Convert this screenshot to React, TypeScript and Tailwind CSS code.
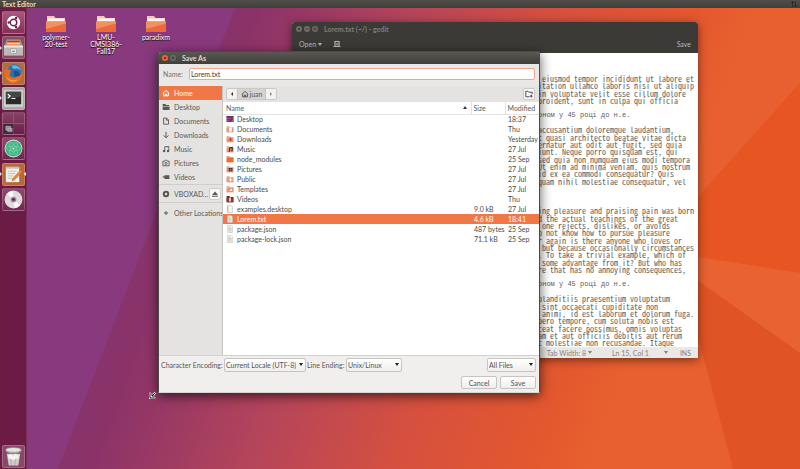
import type { ReactNode } from "react";

const EDITOR_LINES = [
  " eiusmod tempor incididunt ut labore et",
  "itation ullamco laboris nisi ut aliquip",
  "in voluptate velit esse cillum dolore",
  "proident, sunt in culpa qui officia",
  "",
  "оном у 45 році до н.е.",
  "",
  "accusantium doloremque laudantium,",
  "t quasi architecto beatae vitae dicta",
  "ernatur aut odit aut fugit, sed quia",
  "iunt. Neque porro quisquam est, qui",
  "sed quia non numquam eius modi tempora",
  "Ut enim ad minima veniam, quis nostrum",
  "id ex ea commodi consequatur? Quis",
  "quam nihil molestiae consequatur, vel",
  "",
  "",
  "",
  "ing pleasure and praising pain was born",
  "d the actual teachings of the great",
  " one rejects, dislikes, or avoids",
  "o not know how to pursue pleasure",
  "r again is there anyone who loves or",
  " but because occasionally circumstances",
  ". To take a trivial example, which of",
  " some advantage from it? But who has",
  "re that has no annoying consequences,",
  "",
  "оном у 45 році до н.е.",
  "",
  "blanditiis praesentium voluptatum",
  " sint occaecati cupiditate non",
  " animi, id est laborum et dolorum fuga.",
  "bero tempore, cum soluta nobis est",
  "ceat facere possimus, omnis voluptas",
  "am et aut officiis debitis aut rerum",
  "t molestiae non recusandae. Itaque",
  " voluptatibus maiores alias consequatur",
];

const CYRILLIC = /[\u0400-\u04ff]/;

type Row = { name: string; size?: string; modified: string; kind: string; selected?: boolean };

const FILES: Row[] = [
  { name: "Desktop", modified: "18:37", kind: "desktop" },
  { name: "Documents", modified: "Thu", kind: "document" },
  { name: "Downloads", modified: "Yesterday", kind: "download" },
  { name: "Music", modified: "27 Jul", kind: "music" },
  { name: "node_modules", modified: "25 Sep", kind: "folder" },
  { name: "Pictures", modified: "27 Jul", kind: "picture" },
  { name: "Public", modified: "27 Jul", kind: "public" },
  { name: "Templates", modified: "27 Jul", kind: "template" },
  { name: "Videos", modified: "Thu", kind: "video" },
  { name: "examples.desktop", size: "9.0 kB", modified: "27 Jul", kind: "blank" },
  { name: "Lorem.txt", size: "4.6 kB", modified: "18:41", kind: "text", selected: true },
  { name: "package.json", size: "487 bytes", modified: "25 Sep", kind: "text" },
  { name: "package-lock.json", size: "71.1 kB", modified: "25 Sep", kind: "text" },
];

function FileIcon({ kind }: { kind: string }) {
  if (kind === "blank" || kind === "text") {
    return (
      <svg viewBox="0 0 8 8" className="size-2 shrink-0" aria-hidden="true">
        <path d="M1.5 .5h3.7l1.3 1.4v5.6h-5z" fill="#f4f3f2" stroke="#bab8b5" strokeWidth=".5" />
        {kind === "text" && <path d="M2.4 2.4h2M2.4 3.6h3.1M2.4 4.8h3.1M2.4 6h3.1" stroke="#a5a3a0" strokeWidth=".5" />}
        {kind === "blank" && <path d="M1.8 .8v6.6" stroke="#8f8d8a" strokeWidth=".5" />}
      </svg>
    );
  }
  if (kind === "desktop") {
    return (
      <svg viewBox="0 0 8 8" className="size-2 shrink-0" aria-hidden="true">
        <path d="M.5 1h7v6h-7z" fill="#7b2f72" />
        <path d="M.5 1h7v1h-7z" fill="#5b3a58" />
        <path d="M1.4 3h1.2v1H1.4zM3.4 3h1.2v1H3.4zM1.4 5h1.2v1H1.4z" fill="#d06aa0" />
        <path d="M5.5 5h2v2h-2z" fill="#b04a62" />
      </svg>
    );
  }
  return (
    <svg viewBox="0 0 8 8" className="size-2 shrink-0" aria-hidden="true">
      <path d="M.6 1h2.8l.7.9h3.3v5.3H.6z" fill={kind === "video" ? "#5c2a2a" : kind === "folder" ? "#f7a072" : "#f0b79f"} />
      <path d="M.6 2.8h6.8v4.4H.6z" fill={kind === "folder" ? "#ee6a33" : kind === "video" ? "#8a3b34" : "#e89a78"} />
      {kind === "document" && <path d="M3 2.6h3v3.8H3z" fill="#fff" />}
      {kind === "download" && <path d="M4.5 2.6v3M3.2 4.3l1.3 1.5 1.3-1.5" stroke="#8c3a1c" strokeWidth=".8" fill="none" />}
      {kind === "music" && <path d="M3.6 6.2V3l2.6-.5v3.2M2.6 6.2h1.2M5.2 5.8h1.2" stroke="#3a2620" strokeWidth="1.1" fill="none" />}
      {kind === "picture" && <path d="M2.6 3h3.8v3.2H2.6zM4 4h1.2v1.2H4z" fill="#433843" fillRule="evenodd" />}
      {kind === "public" && <path d="M4.5 2.7v3.6M3 4.8h3.4" stroke="#fff" strokeWidth="1" />}
      {kind === "template" && <path d="M2.8 6l3-3.2.8 3.2z" fill="#fff" stroke="#c77655" strokeWidth=".4" />}
      {kind === "video" && <path d="M3 2.4h2v4H3z" fill="#e9c2b2" />}
    </svg>
  );
}

const PLACE_ICONS: Record<string, ReactNode> = {
  Home: <path d="M.8 4.4 4 1.4l3.2 3M1.7 4v3h1.7V5.2h1.2V7h1.7V4" fill="none" stroke="currentColor" strokeWidth="1" />,
  Desktop: <path d="M.7 1h2.6l.7 1h3v1H.7zM.7 3.5h6.8V7H.7z" fill="currentColor" />,
  Documents: <path d="M1.6 1h3l1.9 2v4.2H1.6zM4.4 1v2.2h2.1" fill="none" stroke="currentColor" strokeWidth=".9" />,
  Downloads: <path d="M4 .8v6M1.6 4.4 4 6.8l2.4-2.4" fill="none" stroke="currentColor" strokeWidth="1" />,
  Music: (
    <g fill="currentColor">
      <path d="M2.4 1.2h4.8v1H3.2V6h-.8zM6.4 1.2h.8v5h-.8z" />
      <circle cx="2.1" cy="6" r="1.2" />
      <circle cx="6" cy="6" r="1.2" />
    </g>
  ),
  Pictures: (
    <g fill="none" stroke="currentColor">
      <path d="M.9 2.2h1.7l.6-1h1.6l.6 1h1.7v4.6H.9z" strokeWidth=".9" />
      <circle cx="4" cy="4.4" r="1.1" strokeWidth=".9" />
    </g>
  ),
  Videos: <path d="M.4 4 2.4 2.7v2.6zM2.6 2.2h4.8v3.9H2.6z" fill="currentColor" />,
};

function PlaceIcon({ name }: { name: string }) {
  return (
    <svg viewBox="0 0 8 8" className="size-2 shrink-0" aria-hidden="true">
      {PLACE_ICONS[name]}
    </svg>
  );
}

function Wallpaper() {
  return (
    <svg className="absolute inset-0 size-full" viewBox="0 0 800 469" preserveAspectRatio="none" aria-hidden="true">
      <defs>
        <linearGradient id="sky" gradientUnits="userSpaceOnUse" x1="150" y1="120" x2="650" y2="300">
          <stop offset="0" stopColor="#87336f" />
          <stop offset=".12" stopColor="#8b3369" />
          <stop offset=".4" stopColor="#b5455a" />
          <stop offset=".65" stopColor="#d5503f" />
          <stop offset=".9" stopColor="#e4582e" />
          <stop offset="1" stopColor="#e8602f" />
        </linearGradient>
      </defs>
      <path d="M0 0h800v469H0z" fill="url(#sky)" />
      <path d="M0 0h238L58 469H0z" fill="#89397d" />
      <path d="M800 83 680 217v40l120 16z" fill="#e65522" />
      <path d="M680 254l120 19v80L680 270z" fill="#e96232" />
      <path d="M680 268l120 85v116h-67z" fill="#e05325" />
    </svg>
  );
}

function Tile({ label, tone, running, focused, children }: { label: string; tone: string; running?: boolean; focused?: boolean; children: ReactNode }) {
  return (
    <button type="button" aria-label={label} className="relative flex h-[23px] w-full items-center justify-center">
      {running && <span className="absolute left-0 size-0 border-y-2 border-l-2 border-y-transparent border-l-[#e3d5dd]" />}
      <span className={`flex size-[23px] items-center justify-center rounded-[2px] border border-white/20 ${tone}`}>
        <svg viewBox="0 0 22 22" className="size-[21px]" aria-hidden="true">
          {children}
        </svg>
      </span>
      {focused && <span className="absolute right-0 size-0 border-y-2 border-r-2 border-y-transparent border-r-white" />}
    </button>
  );
}

function Launcher() {
  return (
    <nav aria-label="Launcher" className="flex w-[27px] shrink-0 flex-col justify-between border-r border-[#7d2b59] bg-[#6c1b45] pt-[3px] pb-px">
      <div className="flex h-[200px] flex-col justify-between">
        <Tile label="Search your computer" tone="bg-gradient-to-b from-[#a8577c] to-[#8a2d58]">
          <circle cx="11" cy="11" r="7" fill="#fff" />
          <circle cx="11" cy="11" r="3.4" fill="none" stroke="#6c2048" strokeWidth="1.5" />
          <path d="M5.3 11h2M13 7.4l1.2-2M13 14.6l1.2 2" stroke="#fff" strokeWidth="1.6" />
          <circle cx="6" cy="11" r="1.3" fill="#6c2048" />
          <circle cx="13.7" cy="6.4" r="1.3" fill="#6c2048" />
          <circle cx="13.7" cy="15.6" r="1.3" fill="#6c2048" />
        </Tile>
        <Tile label="Files" tone="bg-[#8c4a5f]" running>
          <path d="M4 2.500h14L21 11H1z" fill="#a19e9b" />
          <path d="M4.500 4h13v5h-13z" fill="#ef8a55" />
          <path d="M4.500 4h13v1.200h-13z" fill="#6b5148" />
          <path d="M4.500 6.500h13v1h-13z" fill="#f7dccf" />
          <path d="M1 9h20v10.500H1z" fill="#bcbbb9" />
          <path d="M1 9h20v2H1z" fill="#e6e5e4" />
          <path d="M8 12.500h6v4.500H8z" fill="#f7f6f6" stroke="#8a8886" strokeWidth=".6" />
          <path d="M9.500 14.900h3" stroke="#555" strokeWidth="1" />
        </Tile>
        <Tile label="Firefox" tone="bg-[#b06a44]" running>
          <circle cx="11" cy="11.500" r="9.500" fill="#e5641c" />
          <circle cx="12" cy="9" r="7.600" fill="#2a6fb8" />
          <path d="M9 3c3-2 9 0 10 5-2-2-3-1-4-2s-3 1-4 0-2-1-2-3z" fill="#63b6df" />
          <path d="M11 8l5 1 2 4-3 3-3-2z" fill="#1d4f8c" />
          <path d="M2 6c1 2 3 0 6 1 1 2-1 3-1 5 1 4 6 4 8 2 3 0 5-3 5-7 2 7-2 14-9 14S-.500 13 2 6z" fill="#ea6a1f" />
          <path d="M3 13c2 5 8 6 13 4-3 4-11 4-13-4z" fill="#f2a236" />
        </Tile>
        <Tile label="Terminal" tone="bg-[#a9a7a5]" running>
          <path d="M1 2h20v18H1z" fill="#cfcecc" />
          <path d="M3 4h16v13H3z" fill="#2a2a28" />
          <path d="M3 4h16v5L3 12z" fill="#464643" />
          <path d="M5 6.500l2.500 2L5 10.500M9 11h4" fill="none" stroke="#fff" strokeWidth="1.200" />
        </Tile>
        <Tile label="Workspace Switcher" tone="bg-gradient-to-b from-[#884369] to-[#6a1d45]">
          <path d="M11 0v22M0 11h22" stroke="#9b5c7e" strokeWidth=".8" />
          <path d="M.500 11.500H11V21.500H.500z" fill="#3f2a37" />
          <path d="M3 14h5v4H3zM5 16h4.500v3.500H5z" fill="#8f8590" stroke="#ccc2ca" strokeWidth=".6" />
        </Tile>
        <Tile label="Atom" tone="bg-gradient-to-b from-[#8f4a70] to-[#742450]">
          <circle cx="11" cy="11" r="9.300" fill="#d7ebe0" />
          <circle cx="11" cy="11" r="8.500" fill="#40b582" />
          <g fill="none" stroke="#7fd3aa" strokeWidth=".7">
            <ellipse cx="11" cy="11" rx="7" ry="2.600" />
            <ellipse cx="11" cy="11" rx="7" ry="2.600" transform="rotate(60 11 11)" />
            <ellipse cx="11" cy="11" rx="7" ry="2.600" transform="rotate(120 11 11)" />
          </g>
          <circle cx="11" cy="11" r="1" fill="#d7ebe0" />
        </Tile>
        <Tile label="Text Editor" tone="bg-[#b9683c]" running focused>
          <path d="M3 3h14v16H3z" fill="#f4f2ee" />
          <path d="M3 3h14v2H3z" fill="#c8c3ba" />
          <path d="M5 7.500h9M5 10h8M5 12.500h6M5 15h5" stroke="#b4b0aa" strokeWidth=".8" />
          <path d="M10 15.500 18.500 6l2 1.800-8.500 9-2.500.700z" fill="#ee8a2e" stroke="#9c5a1f" strokeWidth=".5" />
        </Tile>
        <Tile label="VBOXADDITIONS disc" tone="bg-gradient-to-b from-[#8f4a70] to-[#742450]">
          <circle cx="11" cy="11" r="9.300" fill="#dddcdc" />
          <path d="M11 11 4 5a9 9 0 0 1 6-3.200zM11 11l7 6a9 9 0 0 1-6 3.200z" fill="#f8f8f8" />
          <circle cx="11" cy="11" r="3" fill="#a7809a" />
          <circle cx="11" cy="11" r="1.400" fill="#5c1a3d" />
        </Tile>
      </div>
      <Tile label="Trash" tone="bg-[#8b4768]">
        <path d="M4 8h14l-2 12.500H6z" fill="#cfcecb" />
        <ellipse cx="11" cy="4.500" rx="8.500" ry="3.300" fill="#a8a5a4" />
        <ellipse cx="11" cy="4" rx="7.500" ry="2" fill="#e6e5e3" />
        <path d="M5 10l3-2 2 2 3-2 4 2-1 4-2-1-3 2-3-2-2 1z" fill="#f3f2f0" />
        <path d="M8 14l1 6M13 14l-.500 6" stroke="#a3a09d" strokeWidth=".8" />
      </Tile>
    </nav>
  );
}

function DesktopFolder({ lines }: { lines: string[] }) {
  return (
    <button type="button" className="flex w-[50px] flex-col items-center gap-px text-white">
      <svg viewBox="0 0 20 18" className="h-[18px] w-5" aria-hidden="true">
        <path d="M1 1h7l1.500 2H19v13H1z" fill="#f3c6b0" />
        <path d="M1.500 3.500h17v4h-17z" fill="#fdf6f2" />
        <path d="M0 6.500h20V17H0z" fill="#ec6a3a" />
        <path d="M0 6.500h20v2L0 14z" fill="#f39062" />
      </svg>
      <span className="text-[7px] leading-[7px] [text-shadow:0_1px_1px_#000]">
        {lines.map((l) => (
          <span key={l} className="block">
            {l}
          </span>
        ))}
      </span>
    </button>
  );
}

function Caret() {
  return <span className="inline-block size-0 border-x-2 border-t-[3px] border-x-transparent border-t-current" />;
}

function WindowDot({ close, children }: { close?: boolean; children: ReactNode }) {
  return (
    <button
      type="button"
      aria-label={close ? "Close" : "Window control"}
      className={`flex size-[6px] items-center justify-center rounded-full ${close ? "bg-[#ee6038] text-[#5c2412]" : "bg-[#6f6d67] text-[#3a3935]"}`}
    >
      <svg viewBox="0 0 6 6" className="size-[6px]" fill="none" stroke="currentColor" strokeWidth=".8" aria-hidden="true">
        {children}
      </svg>
    </button>
  );
}

function EditorWindow() {
  return (
    <section aria-label="gedit" className="absolute top-[14px] left-[265px] flex h-[336px] w-[406px] flex-col overflow-hidden rounded-t-[3px] bg-white text-[#4c4c4c] shadow-[0_2px_10px_rgba(0,0,0,0.5)]">
      <header className="flex h-[31px] shrink-0 flex-col bg-[#3b3a36] text-[#8d8a83]">
        <div className="flex h-[14px] items-center gap-[2px] pl-1">
          <WindowDot><path d="M2 2l2 2M4 2 2 4" /></WindowDot>
          <WindowDot><path d="M1.500 3h3" /></WindowDot>
          <WindowDot><path d="M2 2h2v2H2z" /></WindowDot>
          <h2 className="pl-1 text-[7px] leading-[8px] font-bold text-[#817e77]">Lorem.txt (~/) - gedit</h2>
        </div>
        <div className="flex flex-1 items-center pr-[7px] pb-px pl-[7px] text-[7px] leading-[8px] text-[#b8b5ae]">
          <button type="button" className="flex items-center gap-[2px]">
            Open <Caret />
          </button>
          <button type="button" aria-label="New document" className="ml-[11px]">
            <svg viewBox="0 0 8 8" className="size-2" fill="none" stroke="currentColor" aria-hidden="true">
              <path d="M2 6V1.500h4V6M.500 6.500h7M4 3v2.500" strokeWidth="1.200" />
            </svg>
          </button>
          <button type="button" className="ml-auto">Save</button>
        </div>
      </header>
      <div className="min-h-0 flex-1 overflow-hidden">
        <div
          role="textbox"
          aria-multiline="true"
          aria-label="Lorem.txt"
          className="grid h-[301px] auto-rows-fr pt-[22px] pl-[246px] font-['Noto_Sans_Mono_CJK_SC','Liberation_Mono',monospace] text-[8px] leading-[7px] whitespace-pre text-[#5c5c5c]"
        >
          {EDITOR_LINES.map((line, i) => (
            <div key={i} className={CYRILLIC.test(line) ? "font-['Liberation_Mono',monospace] text-[7px]" : ""}>
              {line}
            </div>
          ))}
        </div>
      </div>
      <footer className="flex h-[11px] shrink-0 items-center justify-end bg-[#e9e8e6] pr-[7px] text-[7px] leading-[8px] text-[#84827e]">
        <button type="button" className="mr-[20px] flex items-center gap-[2px]">Tab Width: 8 <Caret /></button>
        <button type="button" className="mr-3 flex items-center gap-[15px]">Ln 15, Col 1 <Caret /></button>
        <span>INS</span>
      </footer>
    </section>
  );
}

function Choice({ id, value, width }: { id: string; value: string; width: string }) {
  return (
    <span className={`relative block shrink-0 ${width}`}>
      <select
        id={id}
        aria-label={value}
        defaultValue={value}
        className="block h-[14px] w-full appearance-none rounded-[2px] border border-[#c6c4c1] bg-gradient-to-b from-white to-[#efeeec] pl-px text-[7px] leading-[12px] text-[#55534f]"
      >
        <option>{value}</option>
      </select>
      <span className="pointer-events-none absolute top-[5px] right-[3px] flex text-[#1e1e1e]">
        <Caret />
      </span>
    </span>
  );
}

function SaveDialog() {
  const place = "flex h-[14px] w-full items-center gap-1 pl-[3px]";
  const push = "h-[13px] w-9 rounded-[2px] border border-[#c6c4c1] bg-gradient-to-b from-white to-[#efeeec] text-[#55534f]";
  return (
    <section
      role="dialog"
      aria-label="Save As"
      className="absolute top-[43px] left-[131px] flex h-[342px] w-[382px] flex-col overflow-hidden rounded-t-[3px] border border-[#4c4a46] border-b-[#d8d6d3] bg-[#f0efed] text-[7px] leading-[8px] text-[#5a5854] shadow-[0_3px_12px_rgba(0,0,0,0.65)]"
    >
      <header className="flex h-3 shrink-0 items-center gap-[2px] bg-gradient-to-b from-[#5a5851] to-[#403f3b] pl-[3px]">
        <WindowDot close><path d="M2 2l2 2M4 2 2 4" /></WindowDot>
        <WindowDot><path d="M2 2h2v2H2z" /></WindowDot>
        <h2 className="pl-1 font-bold text-[#dfdbd2]">Save As</h2>
      </header>
      <div className="flex h-[22px] shrink-0 items-center gap-[6px] bg-[#e9e8e6] pr-1 pb-[2px] pl-1">
        <label htmlFor="file-name" className="text-[#73716d]">Name:</label>
        <input id="file-name" defaultValue="Lorem.txt" className="h-3 min-w-0 flex-1 rounded-[2px] border border-[#f2a58c] bg-white px-px text-[#3d3c3a] outline-none" />
      </div>
      <div className="flex min-h-0 flex-1 border-b border-[#d3d1ce]">
        <aside className="w-16 shrink-0 overflow-hidden border-r border-[#c5c3c0] bg-[#e4e3e1]">
          <ul>
            {["Home", "Desktop", "Documents", "Downloads", "Music", "Pictures", "Videos"].map((name) => (
              <li key={name}>
                <button type="button" className={`${place} ${name === "Home" ? "bg-[#f07746] text-white" : ""}`}>
                  <PlaceIcon name={name} />
                  {name}
                </button>
              </li>
            ))}
          </ul>
          <div className="flex h-[19px] items-center border-y border-[#d0cecb] pr-px">
            <button type="button" className="flex flex-1 items-center gap-1 pl-[3px]">
              <svg viewBox="0 0 8 8" className="size-2 shrink-0" aria-hidden="true">
                <circle cx="4" cy="4" r="2.200" fill="none" stroke="currentColor" strokeWidth="2" />
              </svg>
              VBOXAD…
            </button>
            <button type="button" aria-label="Eject" className="flex size-3 items-center justify-center rounded-[2px] border border-[#cfcdca] bg-[#f8f8f7]">
              <svg viewBox="0 0 8 8" className="size-2" fill="currentColor" aria-hidden="true">
                <path d="M4 1.500 7 5H1zM1 5.700h6v1.100H1z" />
              </svg>
            </button>
          </div>
          <button type="button" className="flex h-[19px] w-full items-center gap-1 pl-[3px] whitespace-nowrap">
            <svg viewBox="0 0 8 8" className="size-2 shrink-0" aria-hidden="true">
              <path d="M4 2v4M2 4h4" stroke="currentColor" strokeWidth="1" />
            </svg>
            Other Locations
          </button>
        </aside>
        <div className="flex min-w-0 flex-1 flex-col bg-white">
          <div className="flex h-4 shrink-0 items-center justify-between bg-[#e4e3e1] pr-1 pb-px pl-[3px]">
            <div className="flex h-3 items-stretch overflow-hidden rounded-[2px] border border-[#cbc9c6] bg-[#f3f2f1]">
              <button type="button" aria-label="Back" className="flex w-[10px] items-center justify-center">
                <span className="size-0 border-y-2 border-r-2 border-y-transparent border-r-[#33322f]" />
              </button>
              <button type="button" className="flex w-[29px] items-center justify-center gap-px border-x border-[#c6c4c1] bg-[#d6d4d1]">
                <PlaceIcon name="Home" />
                juan
              </button>
              <button type="button" aria-label="Forward" className="flex w-[10px] items-center justify-center">
                <span className="size-0 border-y-2 border-l-2 border-y-transparent border-l-[#8a8884]" />
              </button>
            </div>
            <button type="button" aria-label="Create Folder" className="flex size-3 items-center justify-center rounded-[2px] border border-[#cbc9c6] bg-[#fafafa]">
              <svg viewBox="0 0 8 8" className="size-2" fill="none" stroke="#3f3e3b" strokeWidth=".9" aria-hidden="true">
                <path d="M4.500 6.800H.800V1.200h2l.800 1h3.600v2M6.200 4.600v3M4.700 6.100h3" />
              </svg>
            </button>
          </div>
          <table className="w-full table-fixed border-collapse text-left text-[#4c4a47]">
            <colgroup>
              <col />
              <col className="w-[34px]" />
              <col className="w-[34px]" />
            </colgroup>
            <thead>
              <tr className="h-[12px] border-b border-[#e4e3e1] text-[#5d5b57]">
                <th className="p-0 pl-[3px] font-normal">
                  <span className="flex items-center justify-between pr-1">
                    Name <span className="size-0 border-x-2 border-b-[3px] border-x-transparent border-b-[#33322f]" />
                  </span>
                </th>
                <th className="border-l border-[#e4e3e1] p-0 pl-[2px] font-normal">Size</th>
                <th className="border-l border-[#e4e3e1] p-0 pl-[2px] font-normal">Modified</th>
              </tr>
            </thead>
            <tbody>
              {FILES.map((f) => (
                <tr key={f.name} className={`h-[10px] whitespace-nowrap ${f.selected ? "bg-[#f07746] text-white" : ""}`}>
                  <td className="p-0 pl-[3px]">
                    <span className="flex items-center gap-[3px]">
                      <FileIcon kind={f.kind} />
                      {f.name}
                    </span>
                  </td>
                  <td className="p-0 pl-[3px]">{f.size}</td>
                  <td className="p-0 pl-[3px]">{f.modified}</td>
                </tr>
              ))}
            </tbody>
          </table>
        </div>
      </div>
      <footer className="flex shrink-0 flex-col gap-1 py-[2px] pr-[3px] pl-[2px]">
        <div className="flex items-center">
          <label htmlFor="encoding" className="w-[63px] whitespace-nowrap">Character Encoding:</label>
          <Choice id="encoding" value="Current Locale (UTF-8)" width="w-[82px]" />
          <label htmlFor="ending" className="w-[40px] pl-px whitespace-nowrap">Line Ending:</label>
          <Choice id="ending" value="Unix/Linux" width="w-[56px]" />
          <span className="flex-1" />
          <Choice id="filter" value="All Files" width="w-[49px]" />
        </div>
        <div className="flex justify-end gap-[3px] pb-px">
          <button type="button" className={push}>Cancel</button>
          <button type="button" className={push}>Save</button>
        </div>
      </footer>
    </section>
  );
}

export default function App() {
  return (
    <div className="relative flex h-screen flex-col overflow-hidden bg-[#87336f] font-['Lato','Noto_Sans',sans-serif]">
      <Wallpaper />
      <header className="relative flex h-2 shrink-0 items-center justify-between bg-gradient-to-b from-[#504e48] to-[#403f3a] px-[2px] text-[7px] leading-[8px] font-bold text-[#dfdbd2]">
        <h1>Text Editor</h1>
        <svg viewBox="0 0 8 8" className="size-2" fill="none" stroke="#2b2a27" strokeWidth="1" aria-hidden="true">
          <path d="M2.500 7V1.500M1 3l1.500-1.500L4 3M5.500 1.500V7M4 5.500 5.500 7 7 5.500" />
        </svg>
      </header>
      <div className="relative flex min-h-0 flex-1">
        <Launcher />
        <main className="relative min-w-0 flex-1">
          <div className="flex items-start pt-[7px] pl-1">
            <DesktopFolder lines={["polymer-", "20-test"]} />
            <DesktopFolder lines={["LMU-", "CMSI386-", "Fall17"]} />
            <DesktopFolder lines={["paradixm"]} />
          </div>
          <EditorWindow />
          <SaveDialog />
          <svg viewBox="0 0 8 8" className="absolute top-[383px] left-[122px] size-2" aria-hidden="true">
            <path d="M1 1v6h6M6.500 1.500 3 5M3 2.500V5h2.500" fill="none" stroke="#fff" strokeWidth="2" />
            <path d="M1 1v6h6M6.500 1.500 3 5M3 2.500V5h2.500" fill="none" stroke="#111" strokeWidth="1" />
          </svg>
        </main>
      </div>
    </div>
  );
}
